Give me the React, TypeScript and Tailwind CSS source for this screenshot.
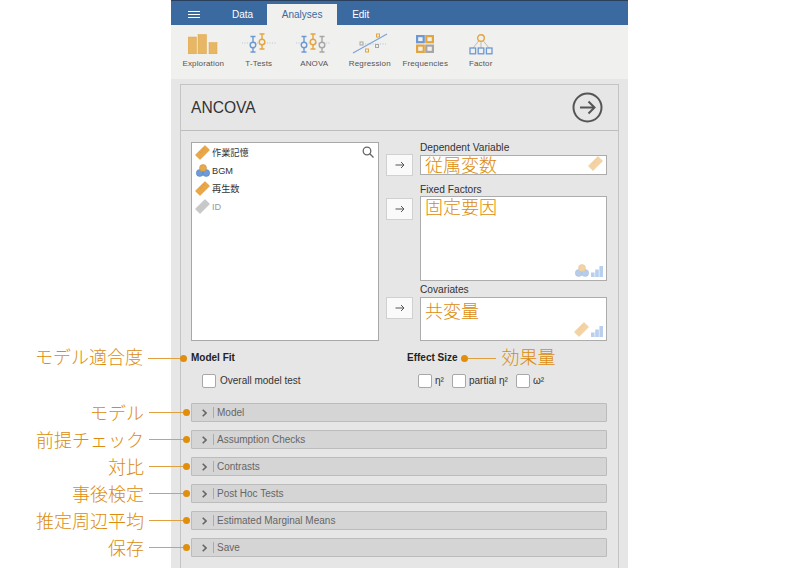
import React from "react";

const FONT = "[font-family:'Liberation_Sans',Arial,sans-serif]";
const CJK = "[font-family:'Noto_Sans_CJK_JP',sans-serif]";

function Ruler({ faded = false, gray = false }: { faded?: boolean; gray?: boolean }) {
  const c = gray ? "#c8c8c8" : "#e8a84a";
  return (
    <svg width="15" height="15" viewBox="0 0 15 15" opacity={faded ? 0.5 : 1}>
      <rect x="0.5" y="4" width="14" height="7" rx="0.6" fill={c} transform="rotate(-45 7.5 7.5)" />
      {!gray && (
        <path d="M4.4 6.6l1.4 1.4M6.2 4.8l1.4 1.4M8 3l1.4 1.4" stroke="#c98a2e" strokeWidth="0.6" />
      )}
    </svg>
  );
}

function Nominal({ faded = false }: { faded?: boolean }) {
  return (
    <svg width="14" height="13" viewBox="0 0 14 13" opacity={faded ? 0.5 : 1}>
      <circle cx="3.8" cy="9" r="3.5" fill="#6d9bd8" stroke="#4f7cb8" strokeWidth="0.5" />
      <circle cx="10.2" cy="9" r="3.5" fill="#6d9bd8" stroke="#4f7cb8" strokeWidth="0.5" />
      <circle cx="7" cy="4" r="3.5" fill="#e5a94f" stroke="#c98a2e" strokeWidth="0.5" />
    </svg>
  );
}

function Bars() {
  return (
    <svg width="12" height="11" viewBox="0 0 12 11" className="ml-[1px]">
      <rect x="0" y="6.5" width="3.6" height="4.5" fill="#b9cfee" />
      <rect x="4.2" y="3.5" width="3.6" height="7.5" fill="#b9cfee" />
      <rect x="8.4" y="0" width="3.6" height="11" fill="#b9cfee" />
    </svg>
  );
}

function BoxPlot({ x, color, top, mid, bot }: { x: number; color: string; top: number; mid: number; bot: number }) {
  return (
    <g stroke={color} strokeWidth="1.4" fill="none">
      <path d={`M${x - 2.5} ${top}h5M${x - 2.5} ${bot}h5M${x} ${top}V${mid - 2.8}M${x} ${mid + 2.8}V${bot}`} />
      <circle cx={x} cy={mid} r="2.8" fill="#f0f0ee" />
    </g>
  );
}

const ExplorationIcon = () => (
  <svg width="30" height="20" viewBox="0 0 30 20">
    <rect x="0" y="3" width="8.5" height="17" fill="#e8b765" stroke="#dfa64a" strokeWidth="0.5" />
    <rect x="10" y="0.5" width="8.5" height="19.5" fill="#e8b765" stroke="#dfa64a" strokeWidth="0.5" />
    <rect x="21" y="8.5" width="8" height="11.5" fill="#e8b765" stroke="#dfa64a" strokeWidth="0.5" />
  </svg>
);
const TTestIcon = () => (
  <svg width="36" height="22" viewBox="0 0 36 22">
    <path d="M1 10H35" stroke="#9db4d4" strokeWidth="0.7" strokeDasharray="1 1.5" />
    <BoxPlot x={12} color="#6c98d4" top={3.5} mid={12} bot={19} />
    <BoxPlot x={21} color="#e3a53f" top={1} mid={9} bot={16} />
  </svg>
);
const AnovaIcon = () => (
  <svg width="36" height="22" viewBox="0 0 36 22">
    <path d="M0 10H35" stroke="#9db4d4" strokeWidth="0.7" strokeDasharray="1 1.5" />
    <BoxPlot x={8} color="#6c98d4" top={3.5} mid={12} bot={19} />
    <BoxPlot x={17} color="#e3a53f" top={1} mid={9} bot={16} />
    <BoxPlot x={26} color="#a6a6a6" top={3.5} mid={12} bot={19} />
  </svg>
);
const RegressionIcon = () => (
  <svg width="36" height="22" viewBox="0 0 36 22">
    <path d="M8 11H35" stroke="#9db4d4" strokeWidth="0.7" strokeDasharray="1 1.5" />
    <path d="M1 20L35 1" stroke="#7ea3d8" strokeWidth="1.2" />
    <g fill="#f0f0ee" strokeWidth="1">
      <rect x="24.5" y="1" width="3" height="3" stroke="#e3a53f" />
      <rect x="8" y="9" width="3" height="3" stroke="#a6a6a6" />
      <rect x="23.5" y="11.5" width="3" height="3" stroke="#a6a6a6" />
      <rect x="13.5" y="16" width="3" height="3" stroke="#e3a53f" />
    </g>
  </svg>
);
const FrequenciesIcon = () => (
  <svg width="18" height="18" viewBox="0 0 18 18">
    <g fill="none" strokeWidth="2.2">
      <rect x="1.1" y="1.1" width="6.6" height="6.1" stroke="#6c98d4" />
      <rect x="10.3" y="1.1" width="6.6" height="6.1" stroke="#e3a53f" />
      <rect x="1.1" y="10.6" width="6.6" height="6.3" stroke="#e3a53f" />
      <rect x="10.3" y="10.6" width="6.6" height="6.3" stroke="#a6a6a6" />
    </g>
  </svg>
);
const FactorIcon = () => (
  <svg width="24" height="21" viewBox="0 0 24 21">
    <path d="M12 7V14M10 6.5L4 14M14 6.5L20 14" stroke="#a6a6a6" strokeWidth="0.7" />
    <circle cx="12" cy="4" r="3.3" fill="#f0f0ee" stroke="#e3a53f" strokeWidth="1.4" />
    <g fill="#f0f0ee" stroke="#6c98d4" strokeWidth="1.3">
      <rect x="1" y="14" width="5.6" height="5.8" />
      <rect x="9.2" y="14" width="5.6" height="5.8" />
      <rect x="17.4" y="14" width="5.6" height="5.8" />
    </g>
  </svg>
);

const tools = [
  { label: "Exploration", icon: <ExplorationIcon /> },
  { label: "T-Tests", icon: <TTestIcon /> },
  { label: "ANOVA", icon: <AnovaIcon /> },
  { label: "Regression", icon: <RegressionIcon /> },
  { label: "Frequencies", icon: <FrequenciesIcon /> },
  { label: "Factor", icon: <FactorIcon /> },
];

function Callout({ text, short = false }: { text: string; short?: boolean }) {
  return (
    <div className={`absolute top-1/2 -translate-y-1/2 flex items-center whitespace-nowrap ${short ? "right-[calc(100%+4px)]" : "right-[calc(100%+2px)]"}`}>
      <span className={`${CJK} relative ${short ? "-top-[2px]" : "-top-[1px]"} text-[18px] leading-[24px] font-light text-[#dc8c0c]`}>{text}</span>
      <span className={`ml-[5px] h-px bg-[#e0a040] ${short ? "w-[32px]" : "w-[34px]"}`} />
      <span className="h-[7px] w-[7px] rounded-full bg-[#e08e0b]" />
    </div>
  );
}

function ArrowButton({ className = "" }: { className?: string }) {
  return (
    <div className={`flex h-[22px] w-[27px] shrink-0 items-center justify-center border border-[#d0d0d0] bg-[#fafafa] ${className}`}>
      <svg width="10" height="8" viewBox="0 0 10 8" fill="none" stroke="#555" strokeWidth="1">
        <path d="M0.5 4H9M6 1l3 3-3 3" />
      </svg>
    </div>
  );
}

function TargetBox({ text, h, textClass, children }: { text: string; h: string; textClass: string; children?: React.ReactNode }) {
  return (
    <div className={`relative ${h} w-[187px] border border-[#acacac] bg-white pl-[4px]`}>
      <span className={`${CJK} block text-[18px] leading-[20px] font-light text-[#dc8c0c] ${textClass}`}>{text}</span>
      <div className="absolute bottom-[3px] right-[3px] flex items-end gap-[1px]">{children}</div>
    </div>
  );
}

function Check({ label, className = "", gap = "gap-[3px]" }: { label: string; className?: string; gap?: string }) {
  return (
    <div className={`flex items-center ${gap} ${className}`}>
      <span className="h-[14px] w-[14px] rounded-[2px] border border-[#a8a8a8] bg-white" />
      <span className="text-[10px] leading-[14px] text-[#333]">{label}</span>
    </div>
  );
}

const sections = [
  { label: "Model", call: "モデル" },
  { label: "Assumption Checks", call: "前提チェック" },
  { label: "Contrasts", call: "対比" },
  { label: "Post Hoc Tests", call: "事後検定" },
  { label: "Estimated Marginal Means", call: "推定周辺平均" },
  { label: "Save", call: "保存" },
];

function VarRow({ icon, name, muted = false }: { icon: React.ReactNode; name: string; muted?: boolean }) {
  return (
    <div className="flex h-[18px] items-center">
      <span className="flex w-[15px] justify-center">{icon}</span>
      <span className={`relative top-[1px] ml-[2px] leading-[14px] ${muted ? "text-[#999]" : "text-[#333]"} text-[9.2px] [font-family:'Liberation_Sans','Noto_Sans_CJK_JP',sans-serif]`}>{name}</span>
    </div>
  );
}

export default function App() {
  return (
    <div className={`h-[568px] w-[800px] overflow-hidden bg-white pl-[171px] ${FONT}`}>
      <div className="flex h-[568px] w-[457px] flex-col bg-[#e6e6e6]">
        <div className="flex h-[25px] shrink-0 items-end border-t border-t-[#2a3f5c] bg-[#3a6a9f] text-[10px] text-white">
          <div className="mb-[7px] ml-[17px] flex w-[12px] flex-col gap-[2px]">
            <span className="h-px bg-white" />
            <span className="h-px bg-white" />
            <span className="h-px bg-white" />
          </div>
          <div className="ml-[32px] mb-[3px] leading-[14px]">Data</div>
          <div className="ml-[14px] flex h-[21px] w-[70px] items-center justify-center bg-[#f0f0ee] text-[#3a6a9f]">Analyses</div>
          <div className="ml-[15px] mb-[3px] leading-[14px]">Edit</div>
        </div>

        <div className="flex h-[54px] shrink-0 bg-[#f0f0ee] pl-[4.5px] pt-[8px]">
          {tools.map((t) => (
            <div key={t.label} className="flex w-[55.5px] flex-col items-center">
              <div className="flex h-[22px] items-center justify-center">{t.icon}</div>
              <div className="mt-[4px] text-[8px] leading-[10px] tracking-[0.15px] text-[#555]">{t.label}</div>
            </div>
          ))}
        </div>

        <div className="flex-1 px-[9px] pt-[5px]">
          <div className="h-[490px] w-[439px] border border-[#c4c4c4] bg-[#e6e6e6]">
            <div className="flex h-[46px] items-center justify-between border-b border-b-[#bdbdbd] pl-[10px] pr-[15px]">
              <span className="text-[15.6px] text-[#333]">ANCOVA</span>
              <svg width="31" height="31" viewBox="0 0 31 31" fill="none" stroke="#555" strokeWidth="2">
                <circle cx="15.5" cy="15.5" r="14" />
                <path d="M8 15.5H22.5M16.5 9.5l6 6-6 6" />
              </svg>
            </div>

            <div className="flex pl-[10px] pt-[11px]">
              <div className="relative h-[199px] w-[188px] border border-[#a8a8a8] bg-white pl-[3px]">
                <VarRow icon={<Ruler />} name="作業記憶" />
                <VarRow icon={<Nominal />} name="BGM" />
                <VarRow icon={<Ruler />} name="再生数" />
                <VarRow icon={<Ruler gray />} name="ID" muted />
                <svg className="absolute right-[4px] top-[3px]" width="12" height="12" viewBox="0 0 12 12" fill="none" stroke="#666" strokeWidth="1.3">
                  <circle cx="5" cy="5" r="3.8" />
                  <path d="M7.8 7.8L11.5 11.5" />
                </svg>
              </div>

              <div className="ml-[7px] flex flex-col">
                <div className="ml-[34px] h-[13px] text-[10.2px] leading-[11px] text-[#333]">Dependent Variable</div>
                <div className="flex items-start gap-[7px]">
                  <ArrowButton className="-mt-px" />
                  <TargetBox text="従属変数" h="h-[20px]" textClass="-mt-[2px]"><Ruler faded /></TargetBox>
                </div>
                <div className="ml-[34px] mt-[7px] h-[13px] text-[10.2px] leading-[14px] text-[#333]">Fixed Factors</div>
                <div className="flex items-start gap-[7px]">
                  <ArrowButton className="mt-[2px]" />
                  <TargetBox text="固定要因" h="h-[85px]" textClass="-mt-[1px]"><Nominal faded /><Bars /></TargetBox>
                </div>
                <div className="ml-[34px] mt-[2px] h-[14px] text-[10.2px] leading-[14px] text-[#333]">Covariates</div>
                <div className="flex items-start gap-[7px]">
                  <ArrowButton />
                  <TargetBox text="共変量" h="h-[44px]" textClass="mt-[2px]"><Ruler faded /><Bars /></TargetBox>
                </div>
              </div>
            </div>

            <div className="flex pl-[10px] pt-[10px]">
              <div className="w-[216px]">
                <div className="relative h-[14px] w-fit text-[10px] font-bold leading-[14px] text-[#222]">
                  Model Fit
                  <Callout text="モデル適合度" short />
                </div>
                <Check label="Overall model test" className="ml-[11px] mt-[9px]" gap="gap-[4px]" />
              </div>
              <div>
                <div className="flex h-[14px] items-center text-[10px] font-bold leading-[14px] text-[#222]">
                  Effect Size
                  <span className="ml-[3px] h-[7px] w-[7px] rounded-full bg-[#e08e0b]" />
                  <span className="h-px w-[28px] bg-[#e0a040]" />
                  <span className={`${CJK} relative -top-[2px] ml-[6px] text-[18px] font-light text-[#dc8c0c]`}>効果量</span>
                </div>
                <div className="ml-[11px] mt-[9px] flex">
                  <Check label="η²" className="w-[34px]" />
                  <Check label="partial η²" className="w-[64px]" />
                  <Check label="ω²" />
                </div>
              </div>
            </div>

            <div className="flex flex-col gap-[8px] pl-[10px] pt-[15px]">
              {sections.map((s) => (
                <div key={s.label} className="relative flex h-[19px] w-[416px] items-center rounded-[1px] border border-[#bcbcbc] bg-[#d5d5d5]">
                  <Callout text={s.call} />
                  <svg className="ml-[10px]" width="5" height="8" viewBox="0 0 5 8" fill="none" stroke="#666" strokeWidth="1.6">
                    <path d="M0.7 0.8L4 4 0.7 7.2" />
                  </svg>
                  <span className="ml-[6px] h-[11px] w-px bg-[#aaa]" />
                  <span className="ml-[3px] text-[10px] text-[#666]">{s.label}</span>
                </div>
              ))}
            </div>
          </div>
        </div>
      </div>
    </div>
  );
}
